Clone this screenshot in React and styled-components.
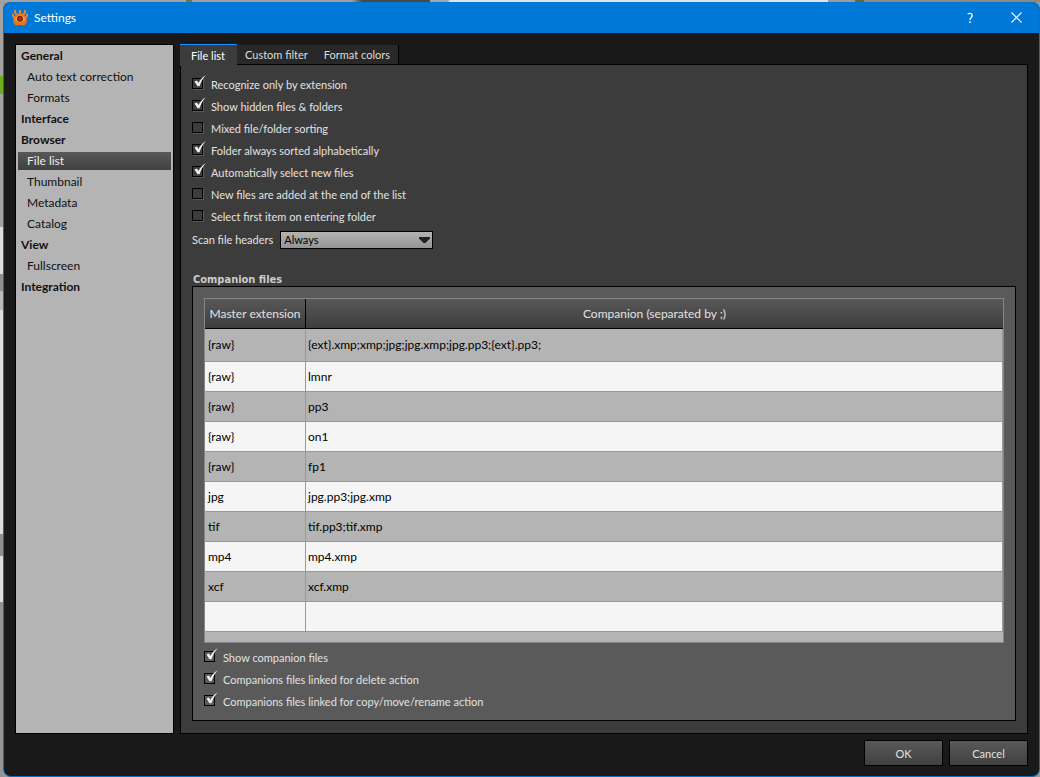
import React from 'react';
import styled, { createGlobalStyle, css } from 'styled-components';

const ui = 'Lato, "Noto Sans", sans-serif';
const heading = '"DejaVu Sans Condensed", "DejaVu Sans", sans-serif';

const GlobalStyle = createGlobalStyle`
  *, *::before, *::after { box-sizing: border-box; }
  html, body, #root { height: 100%; }
  body { margin: 0; background: #999; font: 12px/16px ${ui}; }
`;

const Desktop = styled.div`
  display: flex;
  min-height: 100vh;
  padding: 2px 0 0 3px;
  background:
    linear-gradient(90deg, #a3a3a3 186px, #6d7a45 186px 192px, #a49ba0 192px 352px, #4a4a44 362px 430px, #a2a7ac 430px 448px, #dfe4ea 450px 828px, #9a9a9a 828px 855px, #5c6a3c 855px 864px, #8f8a80 864px) 0 0 / 100% 2px no-repeat,
    linear-gradient(#a3a3a3 76px, #6fae1a 76px 94px, #a3a3a3 94px 227px, #dcdcdc 227px 274px, #8f8f8f 274px 291px, #b9bdb5 291px 310px, #dcdcdc 310px 534px, #8f8f8f 534px 556px, #dcdcdc 556px 602px, #949494 602px) 0 0 / 3px 100% no-repeat,
    #999;
`;

const Dialog = styled.main`
  flex: 1;
  min-width: 0;
  display: flex;
  flex-direction: column;
  border: 1px solid #0d6fc0;
  border-top: 0;
  border-radius: 8px;
  background: #191919;
  overflow: hidden;
`;

const TitleBar = styled.header`
  display: flex;
  align-items: center;
  height: 31px;
  flex: none;
  padding-left: 8px;
  gap: 6px;
  background: #0078d7;
  color: #fff;
`;

const Title = styled.h1`
  flex: 1;
  margin: 0;
  font: 12px/16px ${ui};
`;

const TitleButtons = styled.div`
  display: flex;
`;

const TitleButton = styled.button`
  display: grid;
  place-items: center;
  width: 46px;
  height: 31px;
  padding: 0;
  border: 0;
  background: none;
  color: #fff;
`;

const Body = styled.div`
  flex: 1;
  display: flex;
  gap: 6px;
  padding: 11px 11px 0;
`;

const Sidebar = styled.nav`
  width: 159px;
  flex: none;
  border: 1px solid #000;
  background: #b4b4b4;
  padding: 2px;
`;

const SideLink = styled.a`
  display: block;
  height: 18px;
  margin-bottom: 3px;
  padding-left: ${p => (p.$group ? 3 : 9)}px;
  line-height: 18px;
  font-weight: ${p => (p.$group ? 700 : 400)};
  color: #111;
  text-decoration: none;
  ${p => p.$selected && css`
    color: #eee;
    background: linear-gradient(#595959, #404040);
  `}
`;

const Main = styled.section`
  flex: 1;
  min-width: 0;
  display: flex;
  flex-direction: column;
`;

const Tabs = styled.div`
  display: flex;
  height: 20px;
  flex: none;
`;

const Tab = styled.button`
  height: ${p => (p.$active ? 22 : 19)}px;
  margin-top: ${p => (p.$active ? 0 : 1)}px;
  padding: 0 ${p => (p.$active ? 12 : 8)}px 0 ${p => (p.$active ? 11 : 8)}px;
  border: 0;
  border-top: ${p => (p.$active ? '1px solid #1e90ff' : '0')};
  border-right: ${p => (p.$last ? '1px solid #000' : '0')};
  background: ${p => (p.$active ? '#3c3c3c' : '#282828')};
  color: ${p => (p.$active ? '#fff' : '#ddd')};
  font: 11px/20px ${ui};
  white-space: nowrap;
  z-index: 1;
`;

const Page = styled.div`
  flex: 1;
  display: flex;
  flex-direction: column;
  border: 1px solid #000;
  background: #3c3c3c;
  padding: 9px 11px 12px;
`;

const CheckLabel = styled.label`
  display: flex;
  align-items: center;
  height: 22px;
  color: #e2e2e2;
  font: 11px/20px ${ui};
`;

const CheckFrame = styled.span`
  display: grid;
  width: 19px;
  height: 20px;
  flex: none;

  > * { grid-area: 1 / 1; }
  svg { pointer-events: none; }
`;

const CheckInput = styled.input`
  appearance: none;
  width: 11px;
  height: 11px;
  margin: 3px 0 0;
  border: 1px solid #000;
  background: transparent;
  box-shadow: 1px 1px 0 #5a5a5a;
`;

const SelectRow = styled.div`
  display: flex;
  align-items: center;
  gap: 7px;
  margin-top: 3px;
  height: 18px;
  color: #e2e2e2;
  font: 11px/18px ${ui};
`;

const SelectBox = styled.span`
  display: grid;
  align-items: center;
  width: 153px;

  > * { grid-area: 1 / 1; }
  svg { justify-self: end; margin-right: 3px; pointer-events: none; }
`;

const Select = styled.select`
  appearance: none;
  width: 100%;
  height: 18px;
  padding: 0 3px;
  border: 1px solid #000;
  border-radius: 0;
  background: linear-gradient(#b4b4b4, #949494);
  color: #000;
  font: 11px/16px ${ui};
`;

const GroupTitle = styled.h2`
  margin: 24px 0 0 1px;
  color: #ccc;
  font: 700 11px/13px ${heading};
`;

const Group = styled.section`
  flex: 1;
  border: 1px solid #000;
  background: #5a5a5a;
  padding: 11px 11px 6px;
`;

const TableFrame = styled.div`
  padding-bottom: 10px;
  border: 1px solid #82878f;
  background: #b4b4b4;
`;

const Table = styled.table`
  width: 100%;
  border-collapse: separate;
  border-spacing: 0;
  table-layout: fixed;
`;

const Head = styled.th`
  width: ${p => (p.$width ? `${p.$width}px` : 'auto')};
  height: 30px;
  padding: 0;
  border-bottom: 1px solid #000;
  border-right: ${p => (p.$width ? '1px solid #000' : '0')};
  background: linear-gradient(#585858, #3e3e3e);
  color: #e2e2e2;
  font: 12px/16px ${ui};
  text-align: center;
`;

const Row = styled.tr`
  height: ${p => (p.$tall ? 33 : 30)}px;
  background: ${p => (p.$odd ? '#b4b4b4' : '#f5f5f5')};
`;

const Cell = styled.td`
  padding: 0 3px 0 ${p => (p.$first ? 3 : 2)}px;
  border-bottom: 1px solid #999;
  border-right: 1px solid #999;
  color: #000;
  font: 12px/16px ${ui};
`;

const Checks = styled.div`
  padding-top: 4px;
`;

const Footer = styled.footer`
  display: flex;
  justify-content: flex-end;
  gap: 6px;
  flex: none;
  height: 42px;
  padding: 6px 11px 10px;
`;

const PushButton = styled.button`
  width: 79px;
  height: 26px;
  padding: 1px 0 0;
  border: 1px solid #000;
  background: linear-gradient(#595959, #404040);
  color: #e2e2e2;
  font: 11px/23px ${ui};
`;

function AppIcon() {
  return (
    <svg width="16" height="16" viewBox="0 0 16 16" aria-hidden="true">
      <path d="M3 0.800 C2.600 2.500 3.600 3.600 5 4.600 M8 0.500 V4 M13 0.800 C13.400 2.500 12.400 3.600 11 4.600 M0.700 4.500 C0.800 6.500 1.800 7.300 3.500 7.600 M15.300 4.500 C15.200 6.500 14.200 7.300 12.500 7.600" stroke="#f08a24" strokeWidth="1.900" strokeLinecap="round" fill="none" />
      <path d="M1 9.500 C2 5.500 4.500 3.600 8 3.600 C11.500 3.600 14 5.500 15 9.500 C15 13 13 15.800 11 15.500 C10 14.800 6 14.800 5 15.500 C3 15.800 1 13 1 9.500 Z" fill="#e8731a" />
      <path d="M2.500 9 C4.500 5.600 6.500 5 8 5 C9.500 5 11.500 5.600 13.500 9 C11.500 11.800 9.500 12.400 8 12.400 C6.500 12.400 4.500 11.800 2.500 9 Z" fill="#f5a044" />
      <circle cx="8" cy="8.700" r="3" fill="#6b2a10" />
      <circle cx="8" cy="8.700" r="1.800" fill="#d81e10" />
    </svg>
  );
}

function Check({ label, checked }) {
  return (
    <CheckLabel>
      <CheckFrame>
        <CheckInput type="checkbox" defaultChecked={checked} />
        {checked && (
          <svg width="15" height="15" viewBox="0 0 15 15" aria-hidden="true">
            <path d="M2.500 6.500 L5 5.500 L6.400 8 C8 5 10.500 2 13.800 0.300 C10.700 3.500 8.700 7.500 7.500 11.300 L5.500 11.300 Z" fill="#f0f0f0" />
          </svg>
        )}
      </CheckFrame>
      {label}
    </CheckLabel>
  );
}

const categories = [
  ['General', true], ['Auto text correction'], ['Formats'], ['Interface', true], ['Browser', true],
  ['File list'], ['Thumbnail'], ['Metadata'], ['Catalog'], ['View', true], ['Fullscreen'], ['Integration', true],
];

const options = [
  ['Recognize only by extension', true],
  ['Show hidden files & folders', true],
  ['Mixed file/folder sorting', false],
  ['Folder always sorted alphabetically', true],
  ['Automatically select new files', true],
  ['New files are added at the end of the list', false],
  ['Select first item on entering folder', false],
];

const companions = [
  ['{raw}', '{ext}.xmp;xmp;jpg;jpg.xmp;jpg.pp3;{ext}.pp3;'],
  ['{raw}', 'lmnr'], ['{raw}', 'pp3'], ['{raw}', 'on1'], ['{raw}', 'fp1'],
  ['jpg', 'jpg.pp3;jpg.xmp'], ['tif', 'tif.pp3;tif.xmp'], ['mp4', 'mp4.xmp'], ['xcf', 'xcf.xmp'], ['', ''],
];

export default function App() {
  return (
    <Desktop>
      <GlobalStyle />
      <Dialog>
        <TitleBar>
          <AppIcon />
          <Title>Settings</Title>
          <TitleButtons>
            <TitleButton aria-label="Help">
              <svg width="10" height="12" viewBox="0 0 10 12" fill="none" stroke="#fff" strokeWidth="1.400" aria-hidden="true">
                <path d="M2.700 2 C4 1 7.200 1 7.200 3.500 C7.200 5.500 5 5.500 5 8 M5 9.300 V11" />
              </svg>
            </TitleButton>
            <TitleButton aria-label="Close">
              <svg width="11" height="11" viewBox="0 0 11 11" stroke="#fff" strokeWidth="1.100" aria-hidden="true">
                <path d="M0.500 0.500 L10.500 10.500 M10.500 0.500 L0.500 10.500" />
              </svg>
            </TitleButton>
          </TitleButtons>
        </TitleBar>
        <Body>
          <Sidebar aria-label="Categories">
            {categories.map(([name, group]) => (
              <SideLink key={name} href="#" $group={group} $selected={name === 'File list'}>{name}</SideLink>
            ))}
          </Sidebar>
          <Main>
            <Tabs role="tablist">
              <Tab role="tab" aria-selected="true" $active>File list</Tab>
              <Tab role="tab" aria-selected="false">Custom filter</Tab>
              <Tab role="tab" aria-selected="false" $last>Format colors</Tab>
            </Tabs>
            <Page>
              {options.map(([label, checked]) => <Check key={label} label={label} checked={checked} />)}
              <SelectRow>
                <label htmlFor="scan">Scan file headers</label>
                <SelectBox>
                  <Select id="scan"><option>Always</option></Select>
                  <svg width="11" height="6" viewBox="0 0 11 6" aria-hidden="true"><path d="M0 0 H11 V1.500 L6.500 6 H4.500 L0 1.500 Z" fill="#222" /></svg>
                </SelectBox>
              </SelectRow>
              <GroupTitle>Companion files</GroupTitle>
              <Group>
                <TableFrame>
                  <Table>
                    <thead>
                      <tr>
                        <Head $width={101}>Master extension</Head>
                        <Head>Companion (separated by ;)</Head>
                      </tr>
                    </thead>
                    <tbody>
                      {companions.map(([master, files], i) => (
                        <Row key={i} $tall={i === 0} $odd={i % 2 === 0}>
                          <Cell $first>{master}</Cell>
                          <Cell>{files}</Cell>
                        </Row>
                      ))}
                    </tbody>
                  </Table>
                </TableFrame>
                <Checks>
                  <Check label="Show companion files" checked />
                  <Check label="Companions files linked for delete action" checked />
                  <Check label="Companions files linked for copy/move/rename action" checked />
                </Checks>
              </Group>
            </Page>
          </Main>
        </Body>
        <Footer>
          <PushButton>OK</PushButton>
          <PushButton>Cancel</PushButton>
        </Footer>
      </Dialog>
    </Desktop>
  );
}
